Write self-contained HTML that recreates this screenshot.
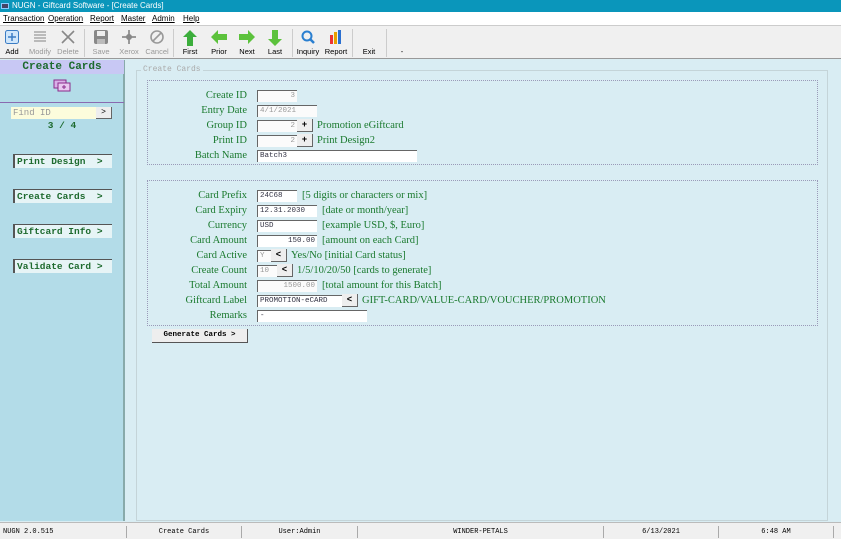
<!DOCTYPE html>
<html><head><meta charset="utf-8"><style>
*{margin:0;padding:0;box-sizing:border-box}
body{width:841px;height:539px;overflow:hidden;background:#d9edf3;font-family:"Liberation Sans",sans-serif;position:relative}
.abs{position:absolute}
#title{left:0;top:0;width:841px;height:12px;background:#0a96bb;color:#fff;font-size:8px;line-height:12px;padding-left:12px}
#menu{left:0;top:12px;width:841px;height:14px;background:#fff;font-size:8px;line-height:14px;color:#000;border-bottom:1px solid #ccc}
#menu span{position:absolute;top:0;text-decoration:underline;text-decoration-thickness:1px}
#tb{left:0;top:26px;width:841px;height:33px;background:#f0f0f0;border-bottom:1px solid #999}
.tl{position:absolute;top:21px;font-size:7.5px;transform:translateX(-50%);white-space:nowrap;color:#000}
.dis{color:#999}
.sep{position:absolute;top:3px;width:1px;height:28px;background:#ccc}
.ic{position:absolute;top:4px}
#side{left:0;top:60px;width:125px;height:461px;background:#b3dce8;border-right:2px solid #8aa}
#sidehead{left:0;top:60px;width:124px;height:14px;background:#c8c8f4;color:#1d6a2e;font:bold 11px "Liberation Mono",monospace;text-align:center;line-height:14px}
.sbtn{position:absolute;left:13px;width:99px;height:14px;background:#e6f4f6;border-left:2px solid #555;border-top:1px solid #555;font:bold 9.5px "Liberation Mono",monospace;color:#1d6a2e;line-height:13px;padding-left:2px;white-space:pre}
#grp{left:136px;top:70px;width:692px;height:451px;border:1px solid #c4d4d8}
#grpt{left:141px;top:65px;background:#d9edf3;font:8px "Liberation Mono",monospace;color:#aaa;padding:0 2px}
.dot{position:absolute;border:1.5px dotted #9a9ab8}
.lb{position:absolute;right:594px;font:10.5px "Liberation Serif",serif;color:#1a7a2e;white-space:nowrap;line-height:12px}
.in{position:absolute;height:12px;background:#fff;border-left:1px solid #666;border-top:1px solid #666;font:7.5px "Liberation Mono",monospace;color:#334;line-height:11px;padding:0 2px}
.ro{color:#999;background:#fbfbfb}
.r{text-align:right}
.bt{position:absolute;height:13px;width:16px;background:#eee;border-right:1px solid #666;border-bottom:1px solid #666;font:bold 9px "Liberation Mono",monospace;text-align:center;line-height:12px;color:#000}
.tx{position:absolute;font:10.5px "Liberation Serif",serif;color:#1a7a2e;white-space:nowrap;line-height:12px}
#status{left:0;top:522px;width:841px;height:17px;background:#f0f0f0;border-top:1px solid #bbb;font:7px "Liberation Mono",monospace;color:#000}
#status div{position:absolute;top:3px;height:12px;border-left:1px solid #aaa;text-align:center;line-height:12px}
</style></head><body>
<div id="title" class="abs"><span class="abs" style="left:1px;top:3px;width:8px;height:6px;background:#446;border:1px solid #8cf"></span>NUGN - Giftcard Software - [Create Cards]</div>
<div id="menu" class="abs"><span style="left:3px">Transaction</span><span style="left:48px">Operation</span><span style="left:90px">Report</span><span style="left:121px">Master</span><span style="left:152px">Admin</span><span style="left:183px">Help</span></div>
<div id="tb" class="abs">
<svg class="ic" style="left:5px" width="14" height="14"><rect x="0.5" y="0.5" width="13" height="13" rx="2" fill="#cfe6fb" stroke="#3a7cc4"/><path d="M7 3v8M3 7h8" stroke="#3a7cc4" stroke-width="1.5"/></svg>
<svg class="ic" style="left:33px" width="14" height="14"><path d="M1 2h12M1 5h12M1 8h12M1 11h12" stroke="#999" stroke-width="1.2"/></svg>
<svg class="ic" style="left:61px" width="14" height="14"><path d="M1 1L13 13M13 1L1 13" stroke="#888" stroke-width="1.6"/></svg>
<div class="sep" style="left:84px"></div>
<svg class="ic" style="left:94px" width="14" height="14"><rect x="0" y="0" width="14" height="14" rx="2" fill="#888"/><rect x="3" y="1" width="8" height="5" fill="#eee"/><rect x="3" y="9" width="8" height="5" fill="#bbb"/></svg>
<svg class="ic" style="left:122px" width="14" height="14"><path d="M7 0v14M0 7h14" stroke="#999" stroke-width="2"/><circle cx="7" cy="7" r="3" fill="#888"/></svg>
<svg class="ic" style="left:150px" width="14" height="14"><circle cx="7" cy="7" r="6" fill="none" stroke="#999" stroke-width="1.6"/><path d="M3 11L11 3" stroke="#999" stroke-width="1.6"/></svg>
<div class="sep" style="left:173px"></div>
<svg class="ic" style="left:183px" width="14" height="16"><path d="M7 0L14 7H10V16H4V7H0Z" fill="#3cae3c"/></svg>
<svg class="ic" style="left:211px" width="16" height="14"><path d="M0 7L7 0V4H16V10H7V14Z" fill="#5cc23c"/></svg>
<svg class="ic" style="left:239px" width="16" height="14"><path d="M16 7L9 0V4H0V10H9V14Z" fill="#5cc23c"/></svg>
<svg class="ic" style="left:268px" width="14" height="16"><path d="M7 16L14 9H10V0H4V9H0Z" fill="#5cc23c"/></svg>
<div class="sep" style="left:292px"></div>
<svg class="ic" style="left:301px" width="14" height="14"><circle cx="6" cy="6" r="4.5" fill="none" stroke="#2a7fd0" stroke-width="2"/><path d="M9 9L13 13" stroke="#2a7fd0" stroke-width="2.5"/></svg>
<svg class="ic" style="left:329px" width="14" height="14"><rect x="1" y="5" width="3" height="9" fill="#e33"/><rect x="5" y="2" width="3" height="12" fill="#e8a000"/><rect x="9" y="0" width="3" height="14" fill="#2a6fd0"/></svg>
<div class="sep" style="left:352px"></div>
<div class="sep" style="left:386px"></div>
<span class="tl" style="left:12px">Add</span><span class="tl dis" style="left:40px">Modify</span><span class="tl dis" style="left:68px">Delete</span><span class="tl dis" style="left:101px">Save</span><span class="tl dis" style="left:129px">Xerox</span><span class="tl dis" style="left:157px">Cancel</span><span class="tl" style="left:190px">First</span><span class="tl" style="left:219px">Prior</span><span class="tl" style="left:247px">Next</span><span class="tl" style="left:275px">Last</span><span class="tl" style="left:308px">Inquiry</span><span class="tl" style="left:336px">Report</span><span class="tl" style="left:369px">Exit</span><span class="tl" style="left:402px">-</span>
</div>
<div id="side" class="abs"></div>
<div id="sidehead" class="abs">Create Cards</div>
<svg class="abs" style="left:53px;top:79px" width="18" height="13"><rect x="1" y="1" width="12" height="8" fill="#d9b0e8" stroke="#8a2a8a"/><rect x="5" y="4" width="12" height="8" fill="#e8c8f0" stroke="#8a2a8a"/><path d="M11 6v4M9 8h4" stroke="#8a2a8a"/></svg>
<div class="abs" style="left:0;top:102px;width:124px;height:1px;background:#8a6ab0"></div>
<div class="abs" style="left:11px;top:107px;width:85px;height:12px;background:#fcfcdc;font:9px 'Liberation Mono',monospace;color:#999;line-height:12px;padding-left:2px">Find ID</div>
<div class="abs" style="left:96px;top:107px;width:16px;height:12px;background:#eee;border-right:1px solid #666;border-bottom:1px solid #666;font:8px 'Liberation Mono',monospace;text-align:center;line-height:11px">&gt;</div>
<div class="abs" style="left:0;top:120px;width:124px;text-align:center;font:bold 9.5px 'Liberation Mono',monospace;color:#1d6a2e">3 / 4</div>
<div class="sbtn" style="top:154px">Print Design  &gt;</div>
<div class="sbtn" style="top:189px">Create Cards  &gt;</div>
<div class="sbtn" style="top:224px">Giftcard Info &gt;</div>
<div class="sbtn" style="top:259px">Validate Card &gt;</div>
<div id="grp" class="abs"></div>
<div id="grpt" class="abs">Create Cards</div>
<div class="dot" style="left:147px;top:80px;width:671px;height:85px"></div>
<div class="dot" style="left:147px;top:180px;width:671px;height:146px"></div>

<div class="lb" style="top:90px">Create ID</div><div class="in ro r" style="left:257px;top:90px;width:40px">3</div>
<div class="lb" style="top:105px">Entry Date</div><div class="in ro" style="left:257px;top:105px;width:60px">4/1/2021</div>
<div class="lb" style="top:120px">Group ID</div><div class="in ro r" style="left:257px;top:120px;width:40px">2</div><div class="bt" style="left:297px;top:119px">+</div><div class="tx" style="left:317px;top:120px">Promotion eGiftcard</div>
<div class="lb" style="top:135px">Print ID</div><div class="in ro r" style="left:257px;top:135px;width:40px">2</div><div class="bt" style="left:297px;top:134px">+</div><div class="tx" style="left:317px;top:135px">Print Design2</div>
<div class="lb" style="top:150px">Batch Name</div><div class="in" style="left:257px;top:150px;width:160px">Batch3</div>

<div class="lb" style="top:190px">Card Prefix</div><div class="in" style="left:257px;top:190px;width:40px">24C68</div><div class="tx" style="left:302px;top:190px">[5 digits or characters or mix]</div>
<div class="lb" style="top:205px">Card Expiry</div><div class="in" style="left:257px;top:205px;width:60px">12.31.2030</div><div class="tx" style="left:322px;top:205px">[date or month/year]</div>
<div class="lb" style="top:220px">Currency</div><div class="in" style="left:257px;top:220px;width:60px">USD</div><div class="tx" style="left:322px;top:220px">[example USD, $, Euro]</div>
<div class="lb" style="top:235px">Card Amount</div><div class="in r" style="left:257px;top:235px;width:60px">150.00</div><div class="tx" style="left:322px;top:235px">[amount on each Card]</div>
<div class="lb" style="top:250px">Card Active</div><div class="in ro" style="left:257px;top:250px;width:14px">Y</div><div class="bt" style="left:271px;top:249px">&lt;</div><div class="tx" style="left:291px;top:250px">Yes/No [initial Card status]</div>
<div class="lb" style="top:265px">Create Count</div><div class="in ro" style="left:257px;top:265px;width:20px">10</div><div class="bt" style="left:277px;top:264px">&lt;</div><div class="tx" style="left:297px;top:265px">1/5/10/20/50 [cards to generate]</div>
<div class="lb" style="top:280px">Total Amount</div><div class="in ro r" style="left:257px;top:280px;width:60px">1500.00</div><div class="tx" style="left:322px;top:280px">[total amount for this Batch]</div>
<div class="lb" style="top:295px">Giftcard Label</div><div class="in" style="left:257px;top:295px;width:85px">PROMOTION-eCARD</div><div class="bt" style="left:342px;top:294px">&lt;</div><div class="tx" style="left:362px;top:295px">GIFT-CARD/VALUE-CARD/VOUCHER/PROMOTION</div>
<div class="lb" style="top:310px">Remarks</div><div class="in" style="left:257px;top:310px;width:110px">-</div>
<div class="abs" style="left:152px;top:329px;width:96px;height:14px;background:#eee;border-right:1px solid #555;border-bottom:1px solid #555;font:bold 7.5px 'Liberation Mono',monospace;line-height:13px;text-align:center">Generate Cards &gt;</div>

<div id="status" class="abs">
<div style="left:0;width:126px;border-left:none;text-align:left;padding-left:3px">NUGN 2.0.515</div>
<div style="left:126px;width:115px">Create Cards</div>
<div style="left:241px;width:116px">User:Admin</div>
<div style="left:357px;width:246px">WINDER-PETALS</div>
<div style="left:603px;width:115px">6/13/2021</div>
<div style="left:718px;width:116px;border-right:1px solid #aaa">6:48 AM</div>
</div>
</body></html>
